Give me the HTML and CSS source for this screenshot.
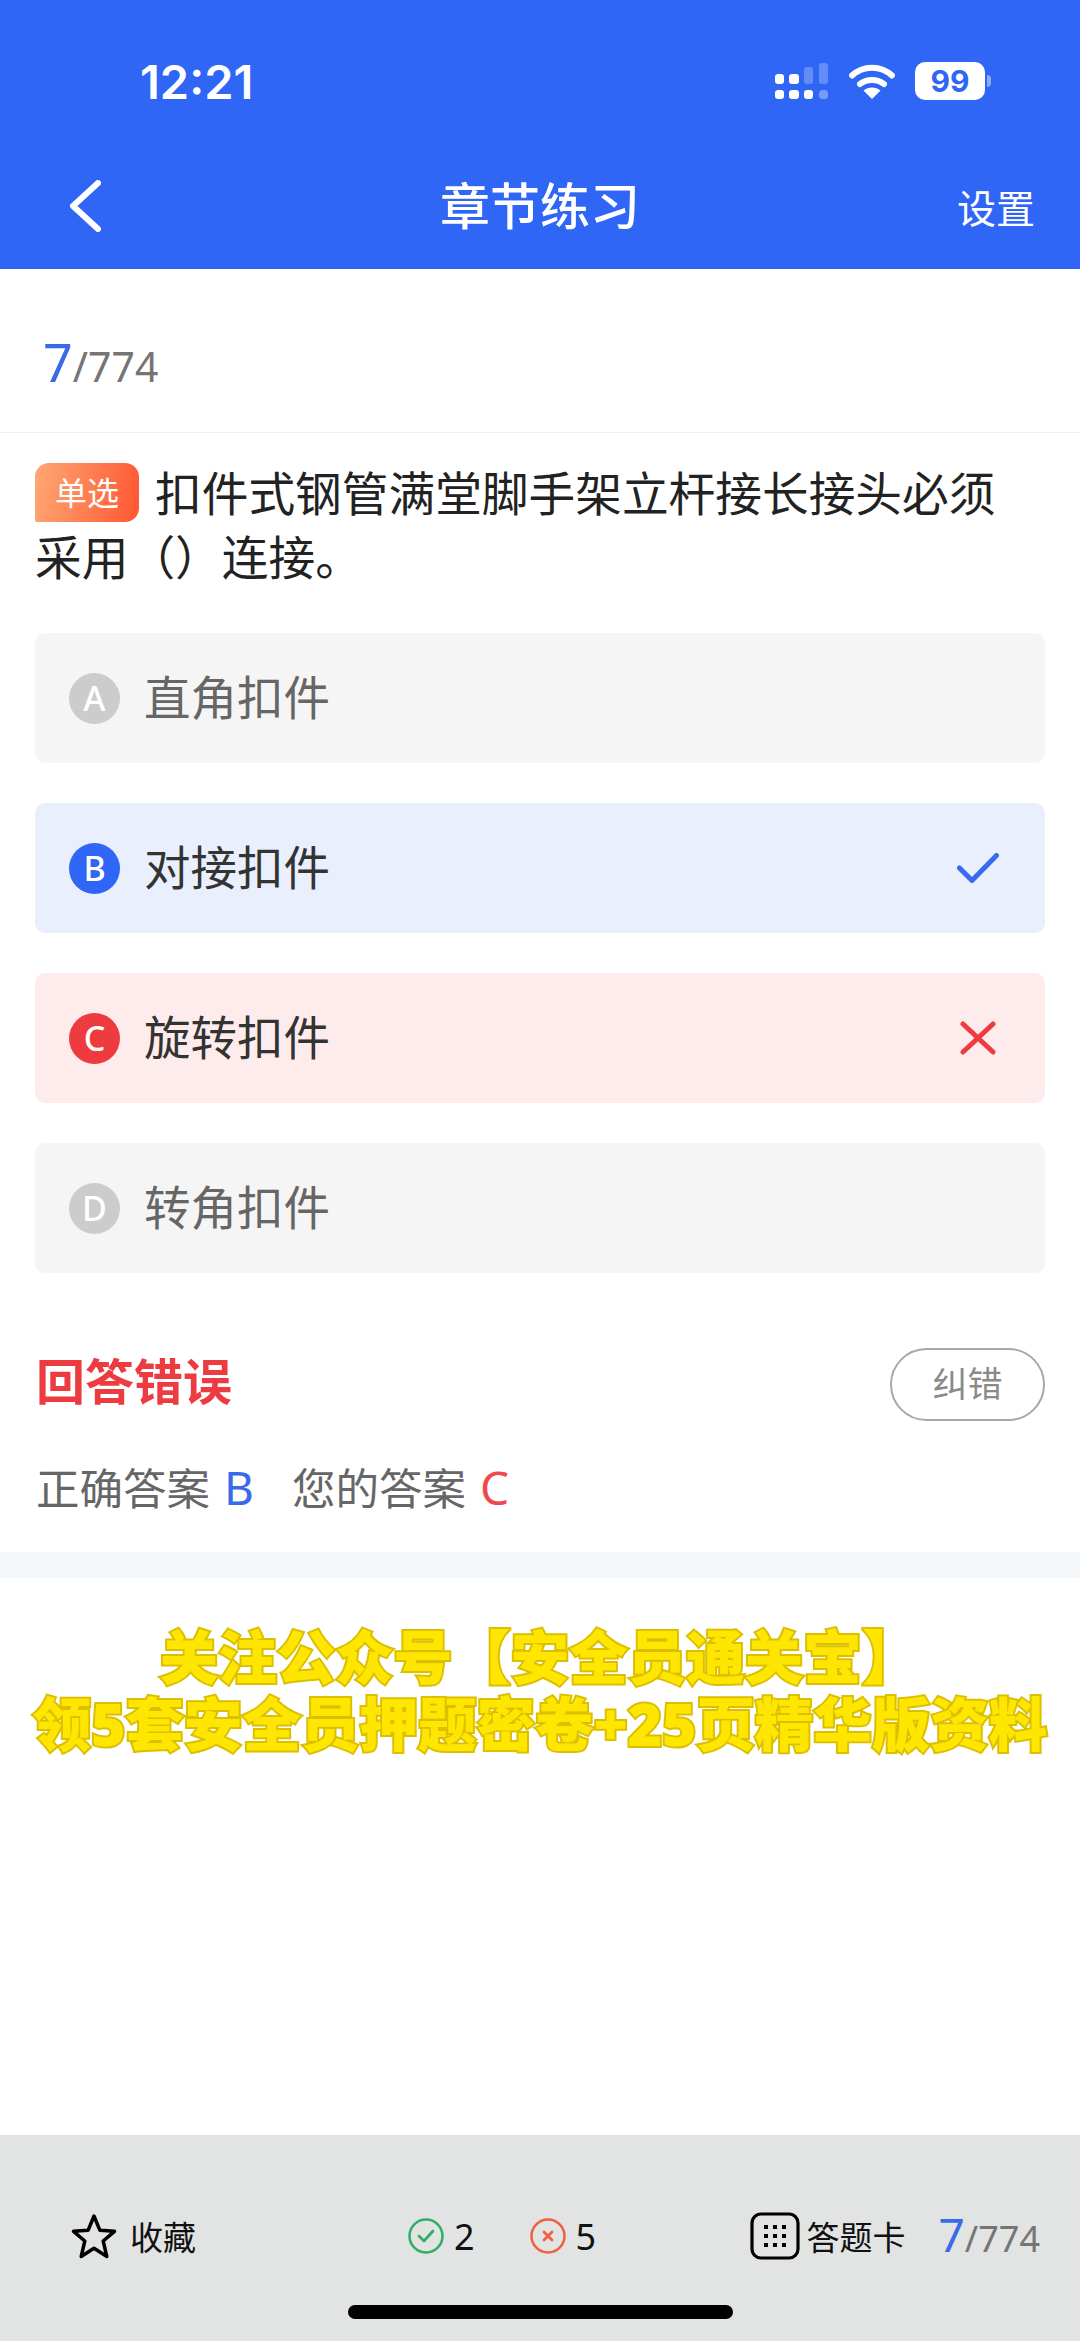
FILE: index.html
```html
<!DOCTYPE html>
<html lang="zh">
<head>
    <meta charset="UTF-8">
    <title>章节练习</title>
    <link rel="stylesheet" href="styles.css">
</head>
<body>
<div class="page">
    <header class="top">
        <div class="status">
            <span class="time">12:21</span>
            <div class="status-icons">
                <svg class="signal" width="54" height="36" viewBox="0 0 54 36">
                    <rect x="1" y="11" width="9" height="10" rx="3" fill="#fff"/>
                    <rect x="15" y="11" width="10" height="10" rx="3" fill="#fff"/>
                    <rect x="30" y="4" width="9" height="17" rx="3" fill="#fff" opacity=".25"/>
                    <rect x="45" y="0" width="9" height="21" rx="3" fill="#fff" opacity=".25"/>
                    <rect x="1" y="27" width="9" height="9" rx="3" fill="#fff"/>
                    <rect x="15" y="27" width="10" height="9" rx="3" fill="#fff"/>
                    <rect x="30" y="27" width="9" height="9" rx="3" fill="#fff"/>
                    <rect x="45" y="27" width="9" height="9" rx="3.5" fill="#fff" opacity=".35"/>
                </svg>
                <svg class="wifi" width="46" height="36" viewBox="0 0 46 36">
                    <path d="M3 12.500C14 2 32 2 43 12.500" fill="none" stroke="#fff" stroke-width="6" stroke-linecap="round"/>
                    <path d="M11 21C17.500 15.500 28.500 15.500 35 21" fill="none" stroke="#fff" stroke-width="6" stroke-linecap="round"/>
                    <path d="M23 36L14.500 27.500C19.500 23.500 26.500 23.500 31.500 27.500Z" fill="#fff"/>
                </svg>
                <div class="battery">99</div>
                <span class="battery-nub"></span>
            </div>
        </div>
        <div class="nav">
            <svg class="back" width="32" height="52" viewBox="0 0 32 52">
                <path d="M29 3L4 26L29 49" fill="none" stroke="#fff" stroke-width="6" stroke-linecap="round" stroke-linejoin="round"/>
            </svg>
            <h1 class="title">章节练习</h1>
            <span class="setting">设置</span>
        </div>
    </header>

    <div class="count"><span class="count-now">7</span><span class="count-all">/774</span></div>

    <p class="question"><span class="tag">单选</span>扣件式钢管满堂脚手架立杆接长接头必须采用（）连接。</p>

    <ul class="options">
        <li class="option">
            <span class="letter">A</span><span class="option-text">直角扣件</span>
        </li>
        <li class="option right">
            <span class="letter">B</span><span class="option-text">对接扣件</span>
            <svg class="mark" width="42" height="30" viewBox="0 0 42 30">
                <path d="M2.500 15L15 27.500L39.500 2.500" fill="none" stroke="#3a6af0" stroke-width="5" stroke-linecap="round" stroke-linejoin="round"/>
            </svg>
        </li>
        <li class="option wrong">
            <span class="letter">C</span><span class="option-text">旋转扣件</span>
            <svg class="mark" width="42" height="34" viewBox="0 0 42 34">
                <path d="M6 3L36 31M36 3L6 31" fill="none" stroke="#ee3b3f" stroke-width="5" stroke-linecap="round"/>
            </svg>
        </li>
        <li class="option">
            <span class="letter">D</span><span class="option-text">转角扣件</span>
        </li>
    </ul>

    <div class="result-head">
        <span class="result-title">回答错误</span>
        <span class="report">纠错</span>
    </div>
    <div class="result-line">
        正确答案<span class="answer blue">B</span><span class="yours">您的答案</span><span class="answer red">C</span>
    </div>

    <div class="band"></div>

    <div class="promo">关注公众号【安全员通关宝】<br>领5套安全员押题密卷+25页精华版资料</div>

    <footer class="bottom">
        <div class="bar">
            <div class="fav">
                <svg width="46" height="46" viewBox="0 0 46 46">
                    <path d="M23 3L28.800 17.200L43.500 18.300L32.200 28L35.800 43.500L23 35.200L10.200 43.500L13.800 28L2.500 18.300L17.200 17.200Z" fill="none" stroke="#000" stroke-width="3.500" stroke-linejoin="round"/>
                </svg>
                <span>收藏</span>
            </div>
            <div class="stats">
                <svg width="36" height="36" viewBox="0 0 36 36">
                    <circle cx="18" cy="18" r="16.500" fill="none" stroke="#2fae66" stroke-width="2.500"/>
                    <path d="M11 18L16 23L25 13" fill="none" stroke="#2fae66" stroke-width="2.800" stroke-linecap="round" stroke-linejoin="round"/>
                </svg>
                <span class="num">2</span>
                <svg class="stat-bad" width="36" height="36" viewBox="0 0 36 36">
                    <circle cx="18" cy="18" r="16.500" fill="none" stroke="#f0603f" stroke-width="2.500"/>
                    <path d="M14 14L22 22M22 14L14 22" fill="none" stroke="#f0603f" stroke-width="2.800" stroke-linecap="round"/>
                </svg>
                <span class="num">5</span>
            </div>
            <div class="card">
                <svg width="50" height="48" viewBox="0 0 50 48">
                    <rect x="2" y="2" width="46" height="44" rx="9" fill="none" stroke="#000" stroke-width="3.200"/>
                    <g fill="#000">
                        <rect x="14" y="13" width="4" height="4"/><rect x="23" y="13" width="4" height="4"/><rect x="32" y="13" width="4" height="4"/>
                        <rect x="14" y="22" width="4" height="4"/><rect x="23" y="22" width="4" height="4"/><rect x="32" y="22" width="4" height="4"/>
                        <rect x="14" y="31" width="4" height="4"/><rect x="23" y="31" width="4" height="4"/><rect x="32" y="31" width="4" height="4"/>
                    </g>
                </svg>
                <span>答题卡</span>
                <div class="bar-count"><span class="count-now">7</span><span class="count-all">/774</span></div>
            </div>
        </div>
        <div class="home"></div>
    </footer>
</div>
</body>
</html>
```

FILE: styles.css
```css
* {
    padding: 0;
    margin: 0;
    list-style: none;
    box-sizing: border-box;
}

body {
    background: #fff;
    font-family: "Noto Sans", "Noto Sans CJK SC", sans-serif;
}

.page {
    width: 1080px;
    height: 2341px;
    display: flex;
    flex-direction: column;
    overflow: hidden;
}

/* top blue header */
.top {
    height: 269px;
    background: #2f66f6;
    color: #fff;
    flex: none;
}

.status {
    height: 162px;
    padding: 0 89px 0 140px;
    display: flex;
    align-items: center;
    justify-content: space-between;
}

.time {
    font-family: Inter, sans-serif;
    font-size: 47px;
    font-weight: 600;
}

.status-icons {
    display: flex;
    align-items: center;
}

.wifi {
    margin-left: 21px;
}

.battery {
    width: 70px;
    height: 38px;
    margin-left: 20px;
    background: #fff;
    border-radius: 10px;
    color: #2f66f6;
    font-family: Inter, sans-serif;
    font-size: 30px;
    font-weight: 700;
    line-height: 38px;
    text-align: center;
}

.battery-nub {
    width: 4px;
    height: 12px;
    margin-left: 2px;
    background: rgba(255, 255, 255, .45);
    border-radius: 0 4px 4px 0;
}

.nav {
    height: 88px;
    padding: 0 45px;
    display: grid;
    grid-template-columns: 1fr auto 1fr;
    align-items: center;
}

.back {
    margin-left: 24px;
}

.title {
    font-size: 50px;
    font-weight: 500;
    line-height: 88px;
}

.setting {
    justify-self: end;
    font-size: 39px;
}

/* question */
.count {
    height: 164px;
    padding: 58px 0 0 43px;
    border-bottom: 1px solid #f1f1f1;
    display: flex;
    align-items: baseline;
    flex: none;
}

.count-now {
    color: #3a6ae6;
    font-size: 52px;
    line-height: 70px;
}

.count-all {
    color: #757575;
    font-size: 41px;
    line-height: 70px;
}

.question {
    margin-top: 28px;
    padding: 0 50px 0 35px;
    color: #222;
    font-size: 46.700px;
    line-height: 64px;
}

.tag {
    display: inline-block;
    width: 104px;
    height: 59px;
    margin-top: 2px;
    margin-right: 16px;
    background: linear-gradient(100deg, #ffa873, #ff5632);
    border-radius: 14px 14px 14px 2px;
    color: #fff;
    font-size: 32px;
    line-height: 59px;
    text-align: center;
    vertical-align: top;
}

.options {
    margin-top: 44px;
    padding: 0 35px;
    display: flex;
    flex-direction: column;
    gap: 40px;
}

.option {
    height: 130px;
    padding: 0 46px 0 34px;
    background: #f5f5f5;
    border-radius: 10px;
    color: #666;
    font-size: 46.500px;
    display: flex;
    align-items: center;
}

.option-text {
    padding-bottom: 6px;
}

.letter {
    width: 51px;
    height: 51px;
    margin-right: 24px;
    background: #ccc;
    border-radius: 50%;
    color: #fff;
    font-size: 34px;
    font-weight: 500;
    line-height: 51px;
    text-align: center;
    flex: none;
}

.option.right {
    background: #e9effd;
    color: #333;
}

.option.right .letter {
    background: #2f66f6;
}

.option.wrong {
    background: #feecec;
    color: #333;
}

.option.wrong .letter {
    background: #ee3b3f;
}

.mark {
    margin-left: auto;
}

/* result */
.result-head {
    height: 73px;
    margin-top: 75px;
    padding: 0 35px 0 36px;
    display: flex;
    align-items: center;
    justify-content: space-between;
    flex: none;
}

.result-title {
    padding-bottom: 8px;
    color: #ec3c41;
    font-size: 49px;
    font-weight: 700;
    line-height: 60px;
}

.report {
    width: 155px;
    height: 73px;
    border: 2px solid #a8a8a8;
    border-radius: 37px;
    color: #8a8a8a;
    font-size: 35px;
    line-height: 67px;
    text-align: center;
}

.result-line {
    margin-top: 36px;
    padding-left: 36px;
    color: #666;
    font-size: 43.500px;
    line-height: 60px;
    height: 60px;
    flex: none;
}

.answer {
    margin-left: 14px;
    font-size: 46px;
}

.blue {
    color: #3a6ae6;
}

.red {
    color: #ec4a4e;
}

.yours {
    margin-left: 38px;
}

.band {
    height: 26px;
    margin-top: 35px;
    background: #f4f7f9;
    flex: none;
}

.promo {
    margin-top: 45px;
    color: #ffe600;
    font-size: 58.500px;
    font-weight: 900;
    line-height: 67px;
    text-align: center;
    white-space: nowrap;
    -webkit-text-stroke: 4px #dcc000;
    paint-order: stroke fill;
}

/* bottom bar */
.bottom {
    margin-top: auto;
    height: 206px;
    padding-top: 57px;
    background: #e2e3e3;
    color: #111;
    font-size: 33px;
    flex: none;
}

.bar {
    height: 88px;
    padding: 0 40px 0 71px;
    display: flex;
    align-items: center;
}

.fav,
.stats,
.card {
    display: flex;
    align-items: center;
}

.fav span {
    margin-left: 13px;
}

.stats {
    margin-left: 212px;
}

.num {
    margin-left: 10px;
    font-size: 36px;
}

.stat-bad {
    margin-left: 55px;
}

.card {
    margin-left: auto;
}

.card span {
    margin-left: 7px;
}

.bar-count {
    margin-left: 33px;
    display: flex;
    align-items: baseline;
}

.bar-count .count-now {
    margin-left: 0;
    font-size: 46px;
}

.bar-count .count-all {
    margin-left: 0;
    font-size: 36px;
}

.home {
    width: 385px;
    height: 14px;
    margin: 25px 0 0 348px;
    background: #000;
    border-radius: 7px;
}
```
